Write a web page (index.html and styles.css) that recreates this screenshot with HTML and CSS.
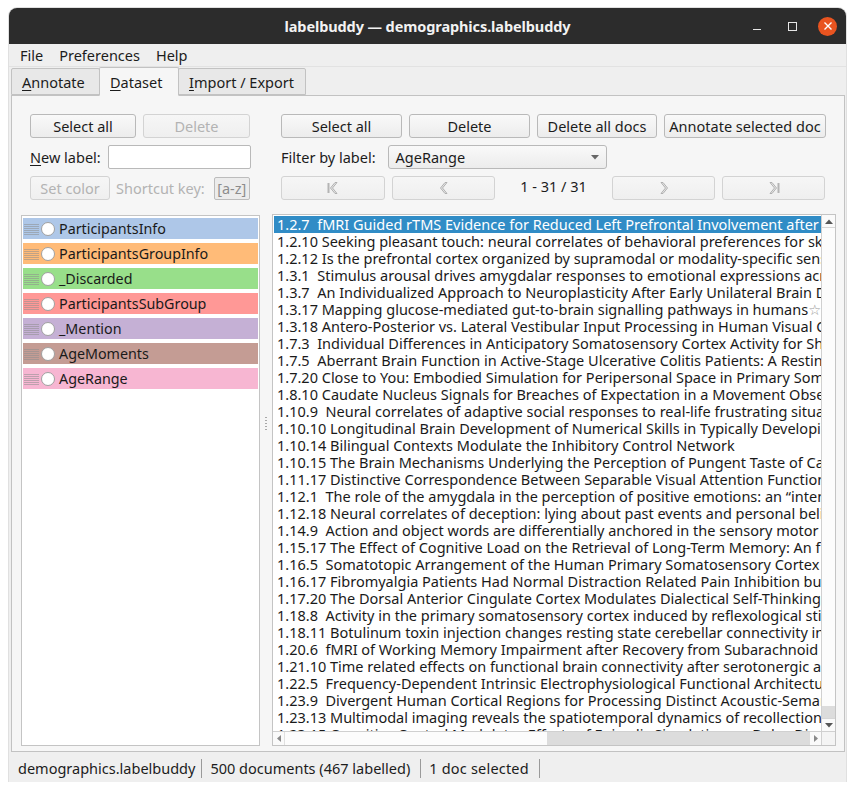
FILE: index.html
```html
<!DOCTYPE html>
<html>
<head>
<meta charset="utf-8">
<link rel="stylesheet" href="styles.css">
</head>
<body>
<div class="window">
  <div class="titlebar">
    <div></div>
    <div class="title">labelbuddy — demographics.labelbuddy</div>
    <div class="wctrls">
      <span class="wmin"></span>
      <span class="wmax"></span>
      <span class="wclose"><svg width="10" height="10" viewBox="0 0 10 10"><path d="M1.5 1.5 L8.5 8.5 M8.5 1.5 L1.5 8.5" stroke="#fff" stroke-width="1.4"/></svg></span>
    </div>
  </div>
  <div class="menubar">
    <span class="menu">File</span>
    <span class="menu">Preferences</span>
    <span class="menu">Help</span>
  </div>
  <div class="tabbar">
    <div class="tab t1"><u>A</u>nnotate</div>
    <div class="tab t2 active"><u>D</u>ataset</div>
    <div class="tab t3"><u>I</u>mport / Export</div>
  </div>
  <div class="panel">
    <div class="leftcol">
      <div class="controls lctrl">
        <div class="row">
          <button class="btn w106">Select all</button>
          <button class="btn w107 dis">Delete</button>
        </div>
        <div class="row">
          <span class="lbl nl"><u>N</u>ew label:</span>
          <input class="input" type="text">
        </div>
        <div class="row">
          <button class="btn w79 dis">Set color</button>
          <span class="lbl dlbl">Shortcut key:</span>
          <span class="keybox">[a-z]</span>
        </div>
      </div>
      <div class="labellist">
        <div class="litem" style="background:#aec7e8"><svg class="grip" width="15" height="12" viewBox="0 0 15 12"><g stroke="#8f8f8f" stroke-width="1" opacity=".55"><path d="M0 1.5H15M0 3.5H15M0 5.5H15M0 7.5H15M0 9.5H15M0 11.5H15"/></g></svg><span class="radio"></span><span>ParticipantsInfo</span></div>
        <div class="litem" style="background:#ffbb78"><svg class="grip" width="15" height="12" viewBox="0 0 15 12"><g stroke="#8f8f8f" stroke-width="1" opacity=".55"><path d="M0 1.5H15M0 3.5H15M0 5.5H15M0 7.5H15M0 9.5H15M0 11.5H15"/></g></svg><span class="radio"></span><span>ParticipantsGroupInfo</span></div>
        <div class="litem" style="background:#98df8a"><svg class="grip" width="15" height="12" viewBox="0 0 15 12"><g stroke="#8f8f8f" stroke-width="1" opacity=".55"><path d="M0 1.5H15M0 3.5H15M0 5.5H15M0 7.5H15M0 9.5H15M0 11.5H15"/></g></svg><span class="radio"></span><span>_Discarded</span></div>
        <div class="litem" style="background:#ff9896"><svg class="grip" width="15" height="12" viewBox="0 0 15 12"><g stroke="#8f8f8f" stroke-width="1" opacity=".55"><path d="M0 1.5H15M0 3.5H15M0 5.5H15M0 7.5H15M0 9.5H15M0 11.5H15"/></g></svg><span class="radio"></span><span>ParticipantsSubGroup</span></div>
        <div class="litem" style="background:#c5b0d5"><svg class="grip" width="15" height="12" viewBox="0 0 15 12"><g stroke="#8f8f8f" stroke-width="1" opacity=".55"><path d="M0 1.5H15M0 3.5H15M0 5.5H15M0 7.5H15M0 9.5H15M0 11.5H15"/></g></svg><span class="radio"></span><span>_Mention</span></div>
        <div class="litem" style="background:#c49c94"><svg class="grip" width="15" height="12" viewBox="0 0 15 12"><g stroke="#8f8f8f" stroke-width="1" opacity=".55"><path d="M0 1.5H15M0 3.5H15M0 5.5H15M0 7.5H15M0 9.5H15M0 11.5H15"/></g></svg><span class="radio"></span><span>AgeMoments</span></div>
        <div class="litem" style="background:#f7b6d2"><svg class="grip" width="15" height="12" viewBox="0 0 15 12"><g stroke="#8f8f8f" stroke-width="1" opacity=".55"><path d="M0 1.5H15M0 3.5H15M0 5.5H15M0 7.5H15M0 9.5H15M0 11.5H15"/></g></svg><span class="radio"></span><span>AgeRange</span></div>
      </div>
    </div>
    <div class="splitter"><span class="dots"></span></div>
    <div class="rightcol">
      <div class="controls rctrl">
        <div class="row g7">
          <button class="btn w121">Select all</button>
          <button class="btn w121">Delete</button>
          <button class="btn w120">Delete all docs</button>
          <button class="btn w162">Annotate selected doc</button>
        </div>
        <div class="row">
          <span class="lbl fl">Filter by label:</span>
          <div class="combo"><span>AgeRange</span><svg width="8" height="5" viewBox="0 0 8 5"><path d="M0 0H8L4 4.5Z" fill="#666"/></svg></div>
        </div>
        <div class="row g7">
          <button class="btn w104 dis"><svg width="14" height="14" viewBox="0 0 14 14"><path d="M2.5 2V12" stroke="#b4b4b4" stroke-width="2"/><path d="M11 1.5 L6.5 7 L11 12.5 H9 L4.5 7 L9 1.5Z" fill="#e6e6e6" stroke="#b0b0b0" stroke-width="1"/></svg></button>
          <button class="btn w103 dis"><svg width="14" height="14" viewBox="0 0 14 14"><path d="M10 1.5 L5.5 7 L10 12.5 H8 L3.5 7 L8 1.5Z" fill="#e6e6e6" stroke="#b0b0b0" stroke-width="1"/></svg></button>
          <span class="pagelbl">1 - 31 / 31</span>
          <button class="btn w103 dis"><svg width="14" height="14" viewBox="0 0 14 14"><path d="M4 1.5 L8.5 7 L4 12.5 H6 L10.5 7 L6 1.5Z" fill="#e6e6e6" stroke="#b0b0b0" stroke-width="1"/></svg></button>
          <button class="btn w103 dis"><svg width="14" height="14" viewBox="0 0 14 14"><path d="M3 1.5 L7.5 7 L3 12.5 H5 L9.5 7 L5 1.5Z" fill="#e6e6e6" stroke="#b0b0b0" stroke-width="1"/><path d="M11.5 2V12" stroke="#b4b4b4" stroke-width="2"/></svg></button>
        </div>
      </div>
      <div class="doclist">
        <div class="docmain">
          <div class="docview">
            <div class="doc sel">1.2.7  fMRI Guided rTMS Evidence for Reduced Left Prefrontal Involvement after a Sad Mood Challenge in Remitted Depression</div>
            <div class="doc">1.2.10 Seeking pleasant touch: neural correlates of behavioral preferences for skin stroking</div>
            <div class="doc">1.2.12 Is the prefrontal cortex organized by supramodal or modality-specific sensory demands during adolescence?</div>
            <div class="doc">1.3.1  Stimulus arousal drives amygdalar responses to emotional expressions across sensory modalities</div>
            <div class="doc">1.3.7  An Individualized Approach to Neuroplasticity After Early Unilateral Brain Damage</div>
            <div class="doc">1.3.17 Mapping glucose-mediated gut-to-brain signalling pathways in humans<span class="star">☆</span></div>
            <div class="doc">1.3.18 Antero-Posterior vs. Lateral Vestibular Input Processing in Human Visual Cortex</div>
            <div class="doc">1.7.3  Individual Differences in Anticipatory Somatosensory Cortex Activity for Shared Pain</div>
            <div class="doc">1.7.5  Aberrant Brain Function in Active-Stage Ulcerative Colitis Patients: A Resting-State fMRI Study</div>
            <div class="doc">1.7.20 Close to You: Embodied Simulation for Peripersonal Space in Primary Somatosensory Cortex</div>
            <div class="doc">1.8.10 Caudate Nucleus Signals for Breaches of Expectation in a Movement Observation Paradigm</div>
            <div class="doc">1.10.9  Neural correlates of adaptive social responses to real-life frustrating situations</div>
            <div class="doc">1.10.10 Longitudinal Brain Development of Numerical Skills in Typically Developing Children</div>
            <div class="doc">1.10.14 Bilingual Contexts Modulate the Inhibitory Control Network</div>
            <div class="doc">1.10.15 The Brain Mechanisms Underlying the Perception of Pungent Taste of Capsaicin</div>
            <div class="doc">1.11.17 Distinctive Correspondence Between Separable Visual Attention Functions and Brain Networks</div>
            <div class="doc">1.12.1  The role of the amygdala in the perception of positive emotions: an “intensity detector”</div>
            <div class="doc">1.12.18 Neural correlates of deception: lying about past events and personal beliefs</div>
            <div class="doc">1.14.9  Action and object words are differentially anchored in the sensory motor system</div>
            <div class="doc">1.15.17 The Effect of Cognitive Load on the Retrieval of Long-Term Memory: An fMRI Study</div>
            <div class="doc">1.16.5  Somatotopic Arrangement of the Human Primary Somatosensory Cortex Derived From fMRI</div>
            <div class="doc">1.16.17 Fibromyalgia Patients Had Normal Distraction Related Pain Inhibition but Cognitive Impairment</div>
            <div class="doc">1.17.20 The Dorsal Anterior Cingulate Cortex Modulates Dialectical Self-Thinking</div>
            <div class="doc">1.18.8  Activity in the primary somatosensory cortex induced by reflexological stimulation</div>
            <div class="doc">1.18.11 Botulinum toxin injection changes resting state cerebellar connectivity in cervical dystonia</div>
            <div class="doc">1.20.6  fMRI of Working Memory Impairment after Recovery from Subarachnoid Hemorrhage</div>
            <div class="doc">1.21.10 Time related effects on functional brain connectivity after serotonergic and cholinergic modulation</div>
            <div class="doc">1.22.5  Frequency-Dependent Intrinsic Electrophysiological Functional Architecture of the Human Verbal Network</div>
            <div class="doc">1.23.9  Divergent Human Cortical Regions for Processing Distinct Acoustic-Semantic Categories</div>
            <div class="doc">1.23.13 Multimodal imaging reveals the spatiotemporal dynamics of recollection</div>
            <div class="doc">1.23.15 Cognitive Control Modulates Effects of Episodic Simulation on Delay Discounting</div>
          </div>
          <div class="vscroll">
            <div class="sarrow up"><svg width="8" height="5" viewBox="0 0 8 5"><path d="M0 5H8L4 0.5Z" fill="#555"/></svg></div>
            <div class="vthumb"></div>
            <div class="vtrack"></div>
            <div class="sarrow dn"><svg width="8" height="5" viewBox="0 0 8 5"><path d="M0 0H8L4 4.5Z" fill="#555"/></svg></div>
          </div>
        </div>
        <div class="hscroll">
          <div class="harrow"><svg width="4" height="7" viewBox="0 0 4 7"><path d="M4 0V7L0 3.5Z" fill="#8a8a8a"/></svg></div>
          <div class="hthumb"></div>
          <div class="htrack"></div>
          <div class="harrow"><svg width="4" height="7" viewBox="0 0 4 7"><path d="M0 0V7L4 3.5Z" fill="#8a8a8a"/></svg></div>
          <div class="corner"></div>
        </div>
      </div>
    </div>
  </div>
  <div class="statusbar">
    <span class="sitem s1">demographics.labelbuddy</span>
    <span class="sitem s2">500 documents (467 labelled)</span>
    <span class="sitem s3">1 doc selected</span>
  </div>
</div>
</body>
</html>
```

FILE: styles.css
```css
* { box-sizing: border-box; }
html, body { margin: 0; padding: 0; background: #ffffff; }
body {
  font-family: "Noto Sans", "DejaVu Sans", sans-serif;
  font-size: 14px;
  color: #1c1c1c;
}
.window {
  margin: 8px 0 0 9px;
  width: 837px;
  height: 774px;
  background: #efefef;
  border-radius: 8px 8px 0 0;
  overflow: hidden;
  display: flex;
  flex-direction: column;
  box-shadow: 0 0 0 1px rgba(0,0,0,0.12);
}
.titlebar {
  height: 36px;
  flex: none;
  background: #2c2c2c;
  display: grid;
  grid-template-columns: 1fr auto 1fr;
  align-items: center;
}
.title {
  color: #f2f2f2;
  font-weight: bold;
  font-size: 14.5px;
  letter-spacing: -0.1px;
}
.wctrls {
  display: flex;
  justify-content: flex-end;
  align-items: center;
  padding-right: 9px;
}
.wmin {
  width: 8px;
  height: 1px;
  background: #e6e6e6;
  margin-top: 7px;
  margin-right: 27px;
}
.wmax {
  width: 9px;
  height: 9px;
  border: 1px solid #e6e6e6;
  margin-right: 21px;
}
.wclose {
  width: 19px;
  height: 19px;
  border-radius: 50%;
  background: #e95420;
  display: flex;
  align-items: center;
  justify-content: center;
}
.menubar {
  height: 23px;
  flex: none;
  display: flex;
  align-items: center;
  padding-left: 3px;
  background: #efefef;
  border-bottom: 1px solid #e2e2e2;
  font-size: 14.5px;
}
.menu { padding: 0 8px; line-height: 22px; }
.tabbar {
  height: 28px;
  flex: none;
  display: flex;
  align-items: flex-end;
  padding-left: 2px;
  position: relative;
  z-index: 1;
}
.tab {
  height: 27px;
  border: 1px solid #c2c2c2;
  border-radius: 2px 2px 0 0;
  background: #e8e8e8;
  padding: 0 10px 0 10px;
  display: flex;
  align-items: center;
  margin-right: -1px;
  font-size: 14.5px;
}
.tab u { text-decoration-thickness: 1px; text-underline-offset: 2px; }
.t1 { width: 89px; }
.t2 { width: 80px; }
.t3 { width: 128px; }
.tab.active {
  height: 29px;
  background: #f6f6f6;
  border-bottom-color: #f6f6f6;
  margin-bottom: -1px;
  z-index: 2;
}
.panel {
  flex: none;
  height: 657px;
  margin: 0 1px 0 2px;
  border: 1px solid #c2c2c2;
  background: #f6f6f6;
  display: flex;
  min-width: 0;
}
.leftcol {
  width: 248px;
  flex: none;
  display: flex;
  flex-direction: column;
  padding: 18px 0 5px 9px;
}
.rightcol {
  flex: 1;
  min-width: 0;
  display: flex;
  flex-direction: column;
  padding: 18px 8px 5px 0;
}
.splitter {
  width: 12px;
  flex: none;
  display: flex;
  align-items: center;
  justify-content: center;
}
.dots {
  width: 2px;
  height: 16px;
  background-image: radial-gradient(circle, #a8a8a8 0.8px, transparent 1px);
  background-size: 2px 3px;
}
.controls {
  display: flex;
  flex-direction: column;
  gap: 7px;
}
.lctrl { padding: 0 9px 0 9px; }
.rctrl { padding: 0 0 0 9px; }
.row {
  display: flex;
  align-items: center;
  height: 24px;
  gap: 7px;
}
.btn {
  font-family: inherit;
  font-size: 14.5px;
  color: #1c1c1c;
  height: 24px;
  padding: 0;
  border: 1px solid #b9b9b9;
  border-radius: 3px;
  background: linear-gradient(#f9f9f9, #ececec);
  display: flex;
  align-items: center;
  justify-content: center;
  flex: none;
}
.btn.dis {
  color: #b3b3b3;
  border-color: #d3d3d3;
  background: linear-gradient(#f6f6f6, #efefef);
}
.w79 { width: 80px; }
.w103 { width: 103px; }
.w104 { width: 104px; }
.w106 { width: 106px; }
.w107 { width: 107px; }
.w120 { width: 120px; }
.w121 { width: 121px; }
.w162 { width: 162px; }
.lbl { white-space: nowrap; font-size: 14.5px; }
.nl u { text-decoration-thickness: 1px; text-underline-offset: 2px; }
.input {
  width: 143px;
  height: 24px;
  border: 1px solid #b9b9b9;
  border-radius: 2px;
  background: #fff;
  font-family: inherit;
  font-size: 14px;
}
.dlbl { color: #b3b3b3; margin-left: -1px; }
.keybox {
  width: 36px;
  height: 23px;
  margin-left: 2px;
  border: 1px solid #bcbcbc;
  border-radius: 2px;
  background: #ececec;
  color: #8c8c8c;
  display: flex;
  align-items: center;
  justify-content: center;
  font-size: 14.5px;
}
.fl { margin-right: 5px; }
.combo {
  width: 219px;
  height: 24px;
  border: 1px solid #b9b9b9;
  border-radius: 3px;
  background: linear-gradient(#f9f9f9, #ececec);
  display: flex;
  align-items: center;
  justify-content: space-between;
  padding: 0 7px 0 7px;
  font-size: 14.5px;
}
.pagelbl {
  width: 103px;
  text-align: center;
  margin-top: -4px;
  font-size: 14.5px;
}
.labellist {
  margin-top: 15px;
  flex: 1;
  background: #fff;
  border: 1px solid #c4c4c4;
  padding: 2px 1px;
  display: flex;
  flex-direction: column;
  gap: 4px;
}
.litem {
  height: 21px;
  display: flex;
  align-items: center;
  padding-left: 1px;
  color: #1a1a1a;
  font-size: 14.3px;
}
.grip { margin-right: 2px; }
.radio {
  width: 14px;
  height: 14px;
  border-radius: 50%;
  background: #fff;
  border: 1px solid #a0a0a0;
  margin-right: 4px;
  flex: none;
}
.doclist {
  margin-top: 14px;
  flex: 1;
  min-height: 0;
  min-width: 0;
  border: 1px solid #c4c4c4;
  background: #fff;
  display: flex;
  flex-direction: column;
}
.docmain {
  flex: 1;
  display: flex;
  min-height: 0;
  min-width: 0;
}
.docview {
  flex: 1;
  min-width: 0;
  overflow: hidden;
  padding-top: 1px;
  padding-left: 1px;
}
.doc {
  height: 17px;
  line-height: 17px;
  white-space: pre;
  padding-left: 3px;
  color: #1a1a1a;
  font-size: 14.5px;
}
.doc.sel { background: #308cc6; color: #fff; }
.star { color: #9a9a9a; }
.vscroll {
  width: 14px;
  flex: none;
  border-left: 1px solid #d0d0d0;
  display: flex;
  flex-direction: column;
  background: #fafafa;
}
.sarrow {
  height: 13px;
  flex: none;
  display: flex;
  align-items: center;
  justify-content: center;
  border-bottom: 1px solid #d6d6d6;
}
.sarrow.dn { border-bottom: none; border-top: 1px solid #d6d6d6; }
.vthumb { flex: 1; background: #fcfcfc; }
.vtrack { height: 12px; background: #dcdcdc; }
.hscroll {
  height: 14px;
  flex: none;
  display: flex;
  border-top: 1px solid #d0d0d0;
  background: #fafafa;
}
.harrow {
  width: 11px;
  flex: none;
  display: flex;
  align-items: center;
  justify-content: center;
}
.hthumb { width: 263px; background: #fcfcfc; border-left: 1px solid #e0e0e0; }
.htrack { flex: 1; background: #dcdcdc; }
.corner { width: 14px; flex: none; border-left: 1px solid #d0d0d0; background: #f4f4f4; }
.statusbar {
  flex: 1;
  display: flex;
  align-items: center;
  padding: 3px 0 0 3px;
  background: #efefef;
  font-size: 14.5px;
}
.sitem {
  padding: 0 6px 0 6px;
  border-right: 1px solid #9a9a9a;
  line-height: 19px;
  margin-right: 2px;
}
.s2 { padding-right: 10px; }
.s3 { padding-right: 10px; letter-spacing: 0.2px; }
```
